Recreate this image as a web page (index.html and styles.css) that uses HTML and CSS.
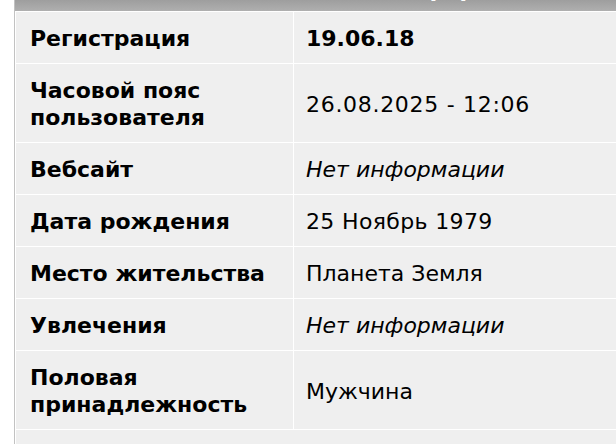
FILE: index.html
```html
<!DOCTYPE html>
<html lang="ru">
<head>
<meta charset="utf-8">
<title>Профиль</title>
<link rel="stylesheet" href="styles.css">
</head>
<body>
<div class="panel">
  <div class="panel-head"><span class="panel-title">Информация</span></div>
  <table class="info">
    <colgroup><col class="c-label"><col class="c-value"></colgroup>
    <tbody>
      <tr><th>Регистрация</th><td class="strong">19.06.18</td></tr>
      <tr><th>Часовой пояс<br>пользователя</th><td class="stamp">26.08.2025 - 12:06</td></tr>
      <tr><th>Вебсайт</th><td class="none">Нет информации</td></tr>
      <tr><th>Дата рождения</th><td class="date">25 Ноябрь 1979</td></tr>
      <tr><th>Место жительства</th><td>Планета Земля</td></tr>
      <tr><th>Увлечения</th><td class="none">Нет информации</td></tr>
      <tr><th>Половая<br>принадлежность</th><td>Мужчина</td></tr>
      <tr class="foot"><td colspan="2"></td></tr>
    </tbody>
  </table>
</div>
</body>
</html>
```
FILE: styles.css
```css
html, body {
  margin: 0;
  padding: 0;
  background: #ffffff;
  overflow: hidden;
}
body {
  font-family: "DejaVu Sans", Verdana, sans-serif;
  font-size: 22px;
  color: #000;
}
.panel {
  margin-left: 14px;
  border-left: 1px solid #c2c2c2;
  width: 1000px;
}
.panel-head {
  height: 11px;
  overflow: hidden;
  background: linear-gradient(#9e9e9e, #afafaf);
}
.panel-title {
  display: block;
  margin-top: -21px;
  margin-left: 374px;
  line-height: 22px;
  color: #fff;
  font-weight: bold;
}
.info {
  border-collapse: separate;
  border-spacing: 1px;
  background: #fff;
  table-layout: fixed;
  width: 1000px;
}
.c-label { width: 277px; }
.info th, .info td {
  background: #efefef;
  line-height: 27px;
  padding: 13px 12px 11px 14px;
  text-align: left;
  vertical-align: middle;
}
.info th {
  font-weight: bold;
}
.info td {
  padding-left: 12px;
  font-weight: normal;
}
.info td.strong { font-weight: bold; }
.info td.none { font-style: italic; }
.info td.stamp { letter-spacing: 0.7px; }
.info td.date { letter-spacing: 0.35px; }
.info .foot td {
  padding: 0;
  height: 20px;
}
```
